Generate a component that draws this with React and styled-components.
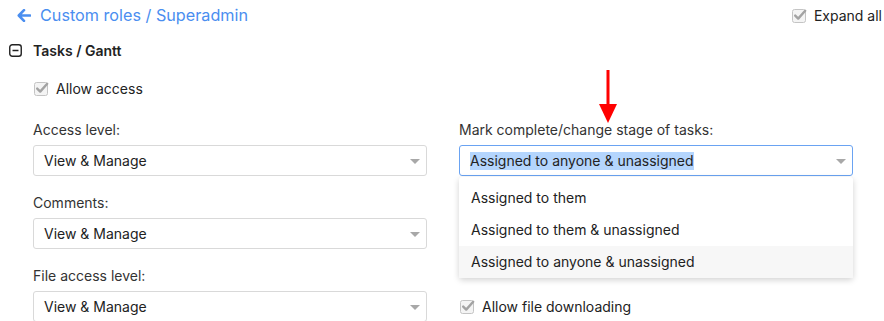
import React from 'react';
import styled, { createGlobalStyle } from 'styled-components';

const GlobalStyle = createGlobalStyle`
  body {
    margin: 0;
    background: #fff;
    font-family: Inter, "Noto Sans", sans-serif;
    color: #222;
  }
`;

const Page = styled.div`
  width: 884px;
  height: 321px;
  overflow: hidden;
`;

const Header = styled.div`
  display: flex;
  align-items: center;
  justify-content: space-between;
  height: 30px;
  padding: 0 2px 0 17px;
`;

const Back = styled.a`
  display: flex;
  align-items: center;
  gap: 9px;
  color: #4a8ef0;
  font-size: 16.2px;
  text-decoration: none;
`;

const Section = styled.div`
  display: flex;
  align-items: center;
  gap: 11px;
  height: 20px;
  margin-top: 10px;
  padding-left: 9px;
  font-size: 14px;
  font-weight: 600;
`;

const Check = styled.label`
  display: flex;
  align-items: center;
  gap: 7px;
  font-size: 14px;
  color: #222;
`;

const AccessRow = styled.div`
  padding: 20px 0 0 34px;
`;

const Grid = styled.div`
  display: grid;
  grid-template-columns: 394px 394px;
  column-gap: 32px;
  row-gap: 17px;
  padding: 23px 0 0 33px;
`;

const Field = styled.div`
  position: relative;
  display: flex;
  flex-direction: column;
`;

const Label = styled.div`
  height: 20px;
  line-height: 20px;
  margin-bottom: 5px;
  font-size: 14px;
  color: #333;
`;

const Select = styled.div`
  position: relative;
  box-sizing: border-box;
  height: 31px;
  display: flex;
  align-items: center;
  padding: 0 10px;
  border: 1px solid ${p => (p.$open ? '#6aa3f2' : '#d9d9d9')};
  border-radius: 3px;
  font-size: 14px;
  color: #222;
`;

const Selected = styled.span`
  background: #b4d5fd;
  line-height: 18px;
`;

const Caret = styled.span`
  position: absolute;
  right: 6px;
  top: 13px;
  width: 0;
  height: 0;
  border-left: 5px solid transparent;
  border-right: 5px solid transparent;
  border-top: 5px solid #a8a8a8;
`;

const Menu = styled.ul`
  position: absolute;
  top: 57px;
  left: 0;
  right: 0;
  margin: 0;
  padding: 5px 0 0;
  list-style: none;
  background: #fff;
  border-radius: 3px;
  box-shadow: 0 2px 6px rgba(0, 0, 0, 0.18);
  z-index: 2;
`;

const Option = styled.li`
  height: 32px;
  line-height: 32px;
  padding: 0 12px;
  font-size: 14px;
  color: #222;
  background: ${p => (p.$active ? '#f7f7f7' : 'transparent')};
`;

const CheckSlot = styled.div`
  display: flex;
  align-items: center;
  height: 31px;
  margin-top: 25px;
  padding-left: 1px;
`;

const Pointer = styled.svg`
  position: absolute;
  left: 139px;
  top: -50px;
`;

const CheckIcon = () => (
  <svg width="15" height="15" viewBox="0 0 15 15">
    <rect x="0.5" y="1.5" width="13" height="13" rx="2" fill="#f4f4f4" stroke="#c4c4c4" />
    <path d="M3.2 7.6 L6.2 10.6 L13.2 2.8" fill="none" stroke="#a3a3a3" strokeWidth="2.4" strokeLinecap="round" strokeLinejoin="round" />
  </svg>
);

const ArrowLeft = () => (
  <svg width="14" height="13" viewBox="0 0 14 13">
    <path d="M7 1.2 L1.8 6.5 L7 11.8 M2 6.5 H13" fill="none" stroke="#4a8ef0" strokeWidth="2.6" strokeLinecap="round" strokeLinejoin="round" />
  </svg>
);

const MinusBox = () => (
  <svg width="13" height="13" viewBox="0 0 13 13">
    <rect x="0.75" y="0.75" width="11.5" height="11.5" rx="2.5" fill="none" stroke="#222" strokeWidth="1.4" />
    <path d="M3.5 6.5 H9.5" stroke="#222" strokeWidth="1.5" />
  </svg>
);

const Dropdown = ({ value, open, children }) => (
  <Select $open={open}>
    {open ? <Selected>{value}</Selected> : value}
    <Caret />
    {children}
  </Select>
);

const stageOptions = [
  'Assigned to them',
  'Assigned to them & unassigned',
  'Assigned to anyone & unassigned',
];

export default function App() {
  return (
    <Page>
      <GlobalStyle />
      <Header>
        <Back>
          <ArrowLeft />
          Custom roles / Superadmin
        </Back>
        <Check>
          <CheckIcon />
          Expand all
        </Check>
      </Header>
      <Section>
        <MinusBox />
        Tasks / Gantt
      </Section>
      <AccessRow>
        <Check>
          <CheckIcon />
          Allow access
        </Check>
      </AccessRow>
      <Grid>
        <Field>
          <Label>Access level:</Label>
          <Dropdown value="View & Manage" />
        </Field>
        <Field>
          <Pointer width="20" height="54" viewBox="0 0 20 54">
            <rect x="8.5" y="0" width="3" height="36" fill="#f00" />
            <polygon points="1,34 19,34 10,53" fill="#f00" />
          </Pointer>
          <Label>Mark complete/change stage of tasks:</Label>
          <Dropdown value="Assigned to anyone & unassigned" open />
          <Menu>
            {stageOptions.map((o, i) => (
              <Option key={o} $active={i === stageOptions.length - 1}>{o}</Option>
            ))}
          </Menu>
        </Field>
        <Field>
          <Label>Comments:</Label>
          <Dropdown value="View & Manage" />
        </Field>
        <Field />
        <Field>
          <Label>File access level:</Label>
          <Dropdown value="View & Manage" />
        </Field>
        <Field>
          <CheckSlot>
            <Check>
              <CheckIcon />
              Allow file downloading
            </Check>
          </CheckSlot>
        </Field>
      </Grid>
    </Page>
  );
}
